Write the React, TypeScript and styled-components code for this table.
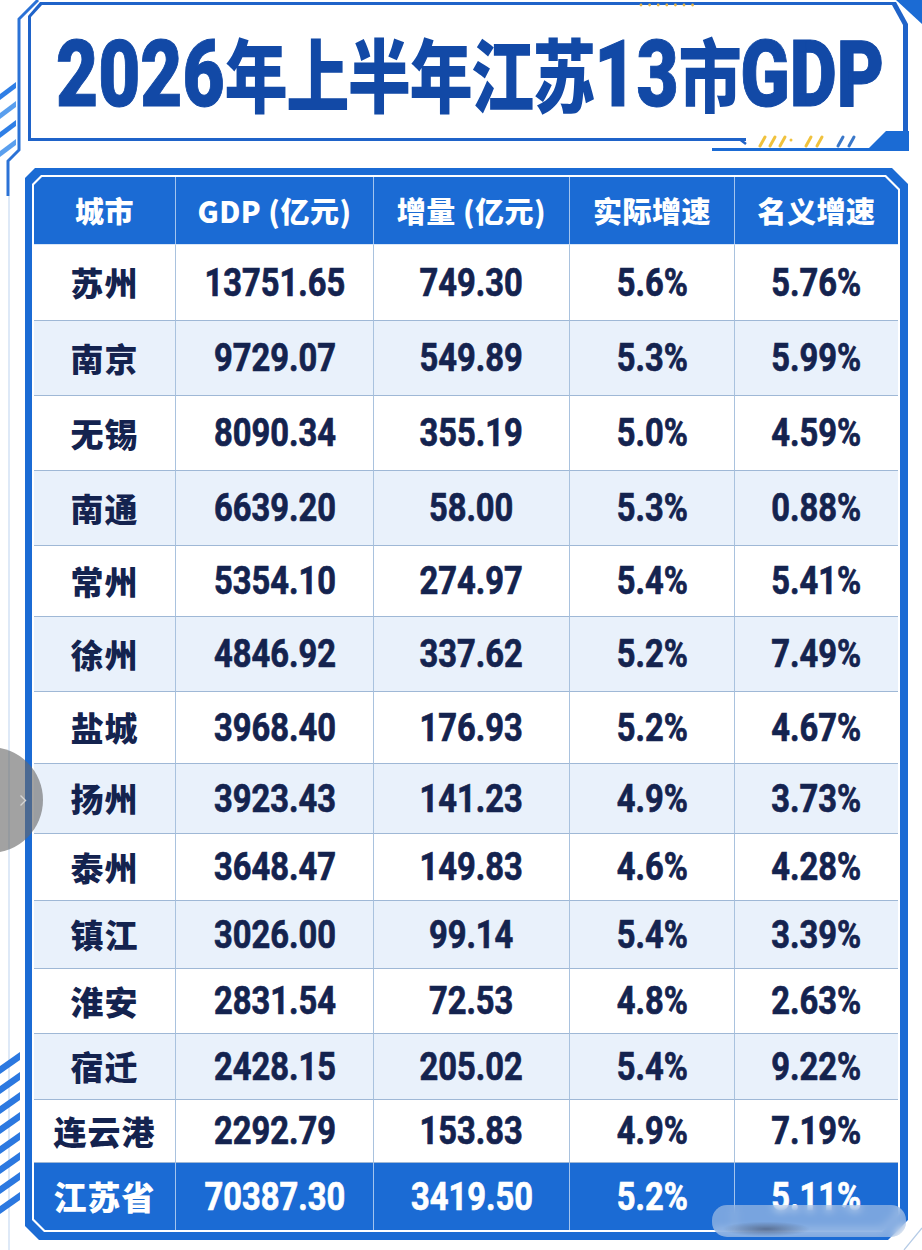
import React from "react";
import styled, { createGlobalStyle } from "styled-components";

const BLUE = "#1b6bd4";
const NAVY = "#14234f";
const TITLE = "#1249a6";

const GlobalStyle = createGlobalStyle`
  html, body { margin: 0; padding: 0; background: #ffffff; }
  body { font-family: "Noto Sans CJK SC", sans-serif; }
`;

const Page = styled.div`
  position: relative;
  width: 922px;
  height: 1250px;
  overflow: hidden;
  background: #ffffff;
  padding: 2px 14px 0 25px;
  box-sizing: border-box;
  display: flex;
  flex-direction: column;
`;

const TitleFrame = styled.div`
  margin-left: 3px;
  height: 139px;
  box-sizing: border-box;
  padding: 3px 5px 3px 3px;
  background: #1f63c9;
  clip-path: polygon(0 14px, 12px 0, calc(100% - 12px) 0, 100% 22px, 100% 100%, 0 100%);
`;

const TitleInner = styled.div`
  height: 100%;
  background: #ffffff;
  display: flex;
  align-items: center;
  justify-content: center;
  clip-path: polygon(0 12px, 11px 0, calc(100% - 11px) 0, 100% 20px, 100% 100%, 0 100%);
`;

const Title = styled.h1`
  margin: 6px 0 0 6px;
  font-family: "Noto Sans CJK SC", sans-serif;
  font-weight: 900;
  font-size: 80px;
  letter-spacing: -2px;
  line-height: 1;
  color: ${TITLE};
  white-space: nowrap;
  transform: scaleX(0.79);
`;

const Latin = styled.span`
  font-family: Roboto, "Liberation Sans", sans-serif;
  font-weight: 900;
  font-size: 92px;
  letter-spacing: 0;
  -webkit-text-stroke: 1px ${TITLE};
`;

const TableFrame = styled.div`
  margin-top: 27px;
  padding: 7px 8px 8px 7px;
  background: ${BLUE};
  clip-path: polygon(0 10px, 10px 0, calc(100% - 16px) 0, 100% 16px, 100% calc(100% - 20px), calc(100% - 20px) 100%, 14px 100%, 0 calc(100% - 14px));
`;

const TableInner = styled.div`
  padding: 2px;
  background: #ffffff;
  clip-path: polygon(0 9px, 9px 0, calc(100% - 14px) 0, 100% 14px, 100% calc(100% - 18px), calc(100% - 18px) 100%, 12px 100%, 0 calc(100% - 12px));
`;

const Grid = styled.div`
  display: grid;
  grid-template-columns: 142px 198px 196px 165px 1fr;
  grid-template-rows: 68px 76px 75px 75px 75px 71px 75px 72px 70px 67px 68px 65px 66px 63px 67px;
  clip-path: polygon(0 8px, 8px 0, calc(100% - 13px) 0, 100% 13px, 100% calc(100% - 16px), calc(100% - 16px) 100%, 11px 100%, 0 calc(100% - 11px));
`;

type Kind = "head" | "body" | "total";

const Cell = styled.div<{ $kind: Kind; $alt?: boolean; $last?: boolean }>`
  display: flex;
  align-items: center;
  justify-content: center;
  box-sizing: border-box;
  overflow: hidden;
  background: ${(p) => (p.$kind === "body" ? (p.$alt ? "#e9f1fb" : "#ffffff") : BLUE)};
  color: ${(p) => (p.$kind === "body" ? NAVY : "#ffffff")};
  border-right: ${(p) =>
    p.$last ? "none" : p.$kind === "body" ? "1px solid #a9c2de" : "1.5px solid rgba(255,255,255,0.6)"};
  border-bottom: ${(p) =>
    p.$kind === "total" ? "none" : p.$kind === "head" ? "1.5px solid #d8e6f7" : "1.5px solid #9fb8d6"};
`;

const HeadText = styled.span`
  font-family: "Noto Sans CJK SC", sans-serif;
  font-weight: 900;
  font-size: 29px;
  letter-spacing: 0.5px;
  line-height: 1;
  white-space: nowrap;
`;

const CityText = styled.span`
  font-family: "Noto Sans CJK SC", sans-serif;
  font-weight: 900;
  font-size: 33px;
  letter-spacing: 1px;
  line-height: 1;
  white-space: nowrap;
`;

const NumText = styled.span`
  display: inline-block;
  font-family: Roboto, "Liberation Sans", sans-serif;
  font-weight: 700;
  font-size: 38px;
  line-height: 1;
  white-space: nowrap;
  transform: scaleX(0.86);
  -webkit-text-stroke: 0.7px currentColor;
`;

const Deco = styled.svg`
  position: absolute;
  left: 0;
  top: 0;
  pointer-events: none;
`;

const NavButton = styled.div`
  position: absolute;
  left: -63px;
  top: 747px;
  width: 106px;
  height: 106px;
  border-radius: 50%;
  background: rgba(105, 105, 105, 0.62);
  display: flex;
  align-items: center;
  justify-content: flex-end;
  padding-right: 16px;
  box-sizing: border-box;
`;

const Smudge = styled.div`
  position: absolute;
  left: 712px;
  top: 1205px;
  width: 194px;
  height: 32px;
  border-radius: 15px;
  backdrop-filter: blur(4px);
  background: radial-gradient(ellipse at 28% 75%, rgba(50, 60, 85, 0.55), rgba(50, 60, 85, 0) 22%),
    rgba(214, 222, 234, 0.5);
`;

const headers = ["城市", "GDP (亿元)", "增量 (亿元)", "实际增速", "名义增速"];

const rows: string[][] = [
  ["苏州", "13751.65", "749.30", "5.6%", "5.76%"],
  ["南京", "9729.07", "549.89", "5.3%", "5.99%"],
  ["无锡", "8090.34", "355.19", "5.0%", "4.59%"],
  ["南通", "6639.20", "58.00", "5.3%", "0.88%"],
  ["常州", "5354.10", "274.97", "5.4%", "5.41%"],
  ["徐州", "4846.92", "337.62", "5.2%", "7.49%"],
  ["盐城", "3968.40", "176.93", "5.2%", "4.67%"],
  ["扬州", "3923.43", "141.23", "4.9%", "3.73%"],
  ["泰州", "3648.47", "149.83", "4.6%", "4.28%"],
  ["镇江", "3026.00", "99.14", "5.4%", "3.39%"],
  ["淮安", "2831.54", "72.53", "4.8%", "2.63%"],
  ["宿迁", "2428.15", "205.02", "5.4%", "9.22%"],
  ["连云港", "2292.79", "153.83", "4.9%", "7.19%"],
];

const total = ["江苏省", "70387.30", "3419.50", "5.2%", "5.11%"];

function DataRow({ values, kind, alt }: { values: string[]; kind: Kind; alt?: boolean }) {
  return (
    <>
      {values.map((v, i) => (
        <Cell key={i} $kind={kind} $alt={alt} $last={i === values.length - 1}>
          {i === 0 ? <CityText>{v}</CityText> : <NumText>{v}</NumText>}
        </Cell>
      ))}
    </>
  );
}

function Decorations() {
  const dots = Array.from({ length: 7 }, (_, i) => (
    <circle key={`d${i}`} cx={641 + i * 8.6} cy={5} r={1.4} fill="#e6b544" />
  ));
  const topStripes = Array.from({ length: 4 }, (_, i) => {
    const y = 80 + i * 19;
    return (
      <polygon
        key={`t${i}`}
        points={`0,${y + 14} 16,${y + 2} 16,${y + 8} 0,${y + 20}`}
        fill={i % 2 === 0 ? "#2f7fe6" : "#5a9fee"}
      />
    );
  });
  const bottomStripes = Array.from({ length: 8 }, (_, i) => {
    const y = 1050 + i * 20;
    return <polygon key={`b${i}`} points={`0,${y + 16} 20,${y + 2} 20,${y + 10} 0,${y + 24}`} fill="#2b78e0" />;
  });
  const slash = (x: number, c: string, k: string) => (
    <line key={k} x1={x} y1={146} x2={x + 5} y2={137} stroke={c} strokeWidth={3} strokeLinecap="round" />
  );
  return (
    <Deco width={922} height={1250} viewBox="0 0 922 1250">
      <polygon points="896,0 922,0 922,24" fill={BLUE} />
      {dots}
      <path d="M38 0 L19 19 L19 150 L8 161 L8 196" stroke="#2b72d6" strokeWidth={3} fill="none" />
      <line x1={9} y1={196} x2={9} y2={1250} stroke="#d3e2f4" strokeWidth={1.5} />
      {topStripes}
      {bottomStripes}
      <rect x={746} y={134} width={158} height={8} fill="#ffffff" />
      <path d="M740 139.5 L746 144" stroke="#1f63c9" strokeWidth={2.5} fill="none" />
      {slash(760, "#f0c23e", "s1")}
      {slash(770, "#f0c23e", "s2")}
      {slash(780, "#f0c23e", "s3")}
      <circle cx={791} cy={140} r={1.5} fill="#f0c23e" />
      {slash(806, "#f0c23e", "s4")}
      {slash(817, "#f0c23e", "s5")}
      {slash(838, "#3b78c9", "s6")}
      {slash(849, "#3b78c9", "s7")}
      <path d="M712 149.5 H909" stroke={BLUE} strokeWidth={3} />
      <line x1={906.5} y1={138} x2={906.5} y2={151} stroke={BLUE} strokeWidth={4} />
      <polygon points="866,151 909,151 909,131 886,131" fill={BLUE} />
      <path d="M922 1228 L904 1250" stroke="#b5cbe6" strokeWidth={1.2} />
    </Deco>
  );
}

export default function App() {
  return (
    <>
      <GlobalStyle />
      <Page>
        <TitleFrame>
          <TitleInner>
            <Title>
              <Latin>2026</Latin>年上半年江苏<Latin>13</Latin>市<Latin>GDP</Latin>
            </Title>
          </TitleInner>
        </TitleFrame>
        <TableFrame>
          <TableInner>
            <Grid>
              {headers.map((h, i) => (
                <Cell key={h} $kind="head" $last={i === headers.length - 1}>
                  <HeadText>{h}</HeadText>
                </Cell>
              ))}
              {rows.map((r, i) => (
                <DataRow key={r[0]} values={r} kind="body" alt={i % 2 === 1} />
              ))}
              <DataRow values={total} kind="total" />
            </Grid>
          </TableInner>
        </TableFrame>
        <Decorations />
        <NavButton>
          <svg width="8" height="13" viewBox="0 0 8 13">
            <path d="M1.5 1.5 L6.5 6.5 L1.5 11.5" stroke="#d4d4d4" strokeWidth="1.4" fill="none" />
          </svg>
        </NavButton>
        <Smudge />
      </Page>
    </>
  );
}
